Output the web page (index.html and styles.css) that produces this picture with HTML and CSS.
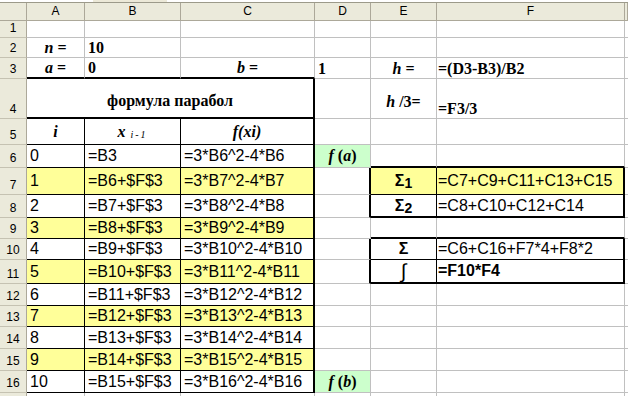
FILE: index.html
```html
<!DOCTYPE html>
<html>
<head>
<meta charset="utf-8">
<title>Sheet</title>
<link rel="stylesheet" href="styles.css">
</head>
<body>
<div class="strip"><span class="strip-tab"></span></div>
<div class="sheet">
  <div class="corner"></div>
  <div class="ch">A</div><div class="ch">B</div><div class="ch">C</div><div class="ch">D</div><div class="ch">E</div><div class="ch">F</div><div class="ch"></div>

  <div class="rh">1</div><div></div><div></div><div></div><div></div><div></div><div></div><div></div>

  <div class="rh">2</div>
  <div class="ser ctr"><i>n</i>&nbsp;=</div>
  <div class="ser pl">10</div>
  <div></div><div></div><div></div><div></div><div></div>

  <div class="rh">3</div>
  <div class="ser ctr bb2"><i>a</i>&nbsp;=</div>
  <div class="ser pl bb2">0</div>
  <div class="ser ctr bb2"><i>b</i>&nbsp;=</div>
  <div class="ser pl">1</div>
  <div class="ser ctr"><i>h</i>&nbsp;=</div>
  <div class="ser pl2">=(D3-B3)/B2</div>
  <div></div>

  <div class="rh">4</div>
  <div class="ser ctr mid4 span3 br2 bb2">формула парабол</div>
  <div></div>
  <div class="ser ctr mid4"><i>h</i>&nbsp;/3=</div>
  <div class="ser pl2">=F3/3</div>
  <div></div>

  <div class="rh">5</div>
  <div class="ser ctr mid tb"><i>i</i></div>
  <div class="ser ctr mid tb"><i>x</i><span class="sub">i-1</span></div>
  <div class="ser ctr mid tb br2"><i>f(xi)</i></div>
  <div></div><div></div><div></div><div></div>

  <div class="rh">6</div>
  <div class="ar mid tb">0</div>
  <div class="ar mid tb">=B3</div>
  <div class="ar mid tb br2">=3*B6^2-4*B6</div>
  <div class="ser ctr mid green"><i>f</i>&nbsp;(<i>a</i>)</div>
  <div class="bb2"></div><div class="bb2"></div>
  <div></div>

  <div class="rh">7</div>
  <div class="ar mid tb yel">1</div>
  <div class="ar mid tb yel">=B6+$F$3</div>
  <div class="ar mid tb yel br2">=3*B7^2-4*B7</div>
  <div class="br2"></div>
  <div class="sig ctr mid yel br1 bb1">Σ<span class="sn">1</span></div>
  <div class="ar mid pl2 yel br2 bb1">=C7+C9+C11+C13+C15</div>
  <div></div>

  <div class="rh">8</div>
  <div class="ar mid tb">2</div>
  <div class="ar mid tb">=B7+$F$3</div>
  <div class="ar mid tb br2">=3*B8^2-4*B8</div>
  <div class="br2"></div>
  <div class="sig ctr mid br1 bb2">Σ<span class="sn">2</span></div>
  <div class="ar mid pl2 br2 bb2">=C8+C10+C12+C14</div>
  <div></div>

  <div class="rh">9</div>
  <div class="ar mid tb yel">3</div>
  <div class="ar mid tb yel">=B8+$F$3</div>
  <div class="ar mid tb yel br2">=3*B9^2-4*B9</div>
  <div></div>
  <div class="bb2"></div><div class="bb2"></div>
  <div></div>

  <div class="rh">10</div>
  <div class="ar mid tb">4</div>
  <div class="ar mid tb">=B9+$F$3</div>
  <div class="ar mid tb br2">=3*B10^2-4*B10</div>
  <div class="br2"></div>
  <div class="sig ctr mid br1 bb1">Σ</div>
  <div class="ar mid pl2 br2 bb1">=C6+C16+F7*4+F8*2</div>
  <div></div>

  <div class="rh">11</div>
  <div class="ar mid tb yel">5</div>
  <div class="ar mid tb yel">=B10+$F$3</div>
  <div class="ar mid tb yel br2">=3*B11^2-4*B11</div>
  <div class="br2"></div>
  <div class="integ ctr mid br1 bb2">∫</div>
  <div class="ar bold mid pl2 br2 bb2">=F10*F4</div>
  <div></div>

  <div class="rh">12</div>
  <div class="ar mid tb">6</div>
  <div class="ar mid tb">=B11+$F$3</div>
  <div class="ar mid tb br2">=3*B12^2-4*B12</div>
  <div></div><div></div><div></div><div></div>

  <div class="rh">13</div>
  <div class="ar mid tb yel">7</div>
  <div class="ar mid tb yel">=B12+$F$3</div>
  <div class="ar mid tb yel br2">=3*B13^2-4*B13</div>
  <div></div><div></div><div></div><div></div>

  <div class="rh">14</div>
  <div class="ar mid tb">8</div>
  <div class="ar mid tb">=B13+$F$3</div>
  <div class="ar mid tb br2">=3*B14^2-4*B14</div>
  <div></div><div></div><div></div><div></div>

  <div class="rh">15</div>
  <div class="ar mid tb yel">9</div>
  <div class="ar mid tb yel">=B14+$F$3</div>
  <div class="ar mid tb yel br2">=3*B15^2-4*B15</div>
  <div></div><div></div><div></div><div></div>

  <div class="rh">16</div>
  <div class="ar mid tb">10</div>
  <div class="ar mid tb">=B15+$F$3</div>
  <div class="ar mid tb br2">=3*B16^2-4*B16</div>
  <div class="ser ctr mid green"><i>f</i>&nbsp;(<i>b</i>)</div>
  <div></div><div></div><div></div>

  <div class="rh"></div>
  <div></div><div></div><div></div><div></div><div></div><div></div><div></div>
</div>
</body>
</html>
```

FILE: styles.css
```css
html, body {
  margin: 0;
  padding: 0;
  background: #ffffff;
}
body {
  width: 628px;
  height: 396px;
  overflow: hidden;
  font-family: "Liberation Sans", Arial, sans-serif;
  color: #000;
}
.strip {
  height: 2px;
  display: flex;
  background: #ffffff;
  border-bottom: 1px solid #9c9a8a;
}
.strip-tab {
  margin-left: 93px;
  width: 74px;
  background: #ece9d8;
}
.sheet {
  display: grid;
  grid-template-columns: 27px 58px 96px 134px 56px 66px 188px 3px;
  grid-template-rows: 18px 17px 20px 21px 40px 26px 23px 27px 23px 21px 21px 24px 22px 21px 22px 22px 22px 20px;
}
.sheet > div {
  box-sizing: border-box;
  border-right: 1px solid #c0c0c0;
  border-bottom: 1px solid #c0c0c0;
  display: flex;
  align-items: flex-end;
  white-space: nowrap;
  overflow: hidden;
  min-width: 0;
  padding-left: 3px;
}
.sheet > .corner {
  background: #ebeadb;
  border-right: 1px solid #aca899;
  border-bottom: 1px solid #aca899;
}
.sheet > .ch {
  background: #ebeadb;
  border-right: 1px solid #aca899;
  border-bottom: 1px solid #aca899;
  justify-content: center;
  padding: 0 0 2px 0;
  font-size: 12px;
  line-height: 13px;
}
.sheet > .rh {
  background: #ebeadb;
  border-right: 1px solid #aca899;
  border-bottom: 1px solid #c5c2b2;
  justify-content: center;
  padding: 0 0 2px 0;
  font-size: 12px;
  line-height: 14px;
}
.ser {
  font-family: "Liberation Serif", "Times New Roman", serif;
  font-weight: bold;
  font-size: 16px;
}
.ar {
  font-family: "Liberation Sans", Arial, sans-serif;
  font-size: 16px;
  line-height: 18px;
}
.bold { font-weight: bold; }
.sheet > .ctr { justify-content: center; padding-left: 0; }
.sheet > .pl2 { padding-left: 1px; }
.sheet > .mid { align-items: center; }
.sheet > .mid4 { align-items: center; padding-top: 6px; }
.span3 { grid-column: span 3; }
.sheet > .tb {
  border-right: 1px solid #000;
  border-bottom: 1px solid #000;
}
.sheet > .br2 { border-right: 2px solid #000; }
.sheet > .br1 { border-right: 1px solid #000; }
.sheet > .bb2 { border-bottom: 2px solid #000; }
.sheet > .bb1 { border-bottom: 1px solid #000; }
.yel { background: #ffff99; }
.green { background: #ccffcc; }
.sub {
  font-size: 10px;
  font-weight: normal;
  font-style: italic;
  letter-spacing: 2px;
  margin-left: 5px;
  position: relative;
  top: 3px;
}
.sig {
  font-family: "Liberation Sans", Arial, sans-serif;
  font-weight: bold;
  font-size: 16px;
}
.sn {
  font-size: 14px;
  position: relative;
  top: 2px;
}
.sheet > .integ {
  font-family: "Liberation Sans", Arial, sans-serif;
  font-size: 20px;
  font-weight: normal;
  line-height: 20px;
  overflow: visible;
}
```
